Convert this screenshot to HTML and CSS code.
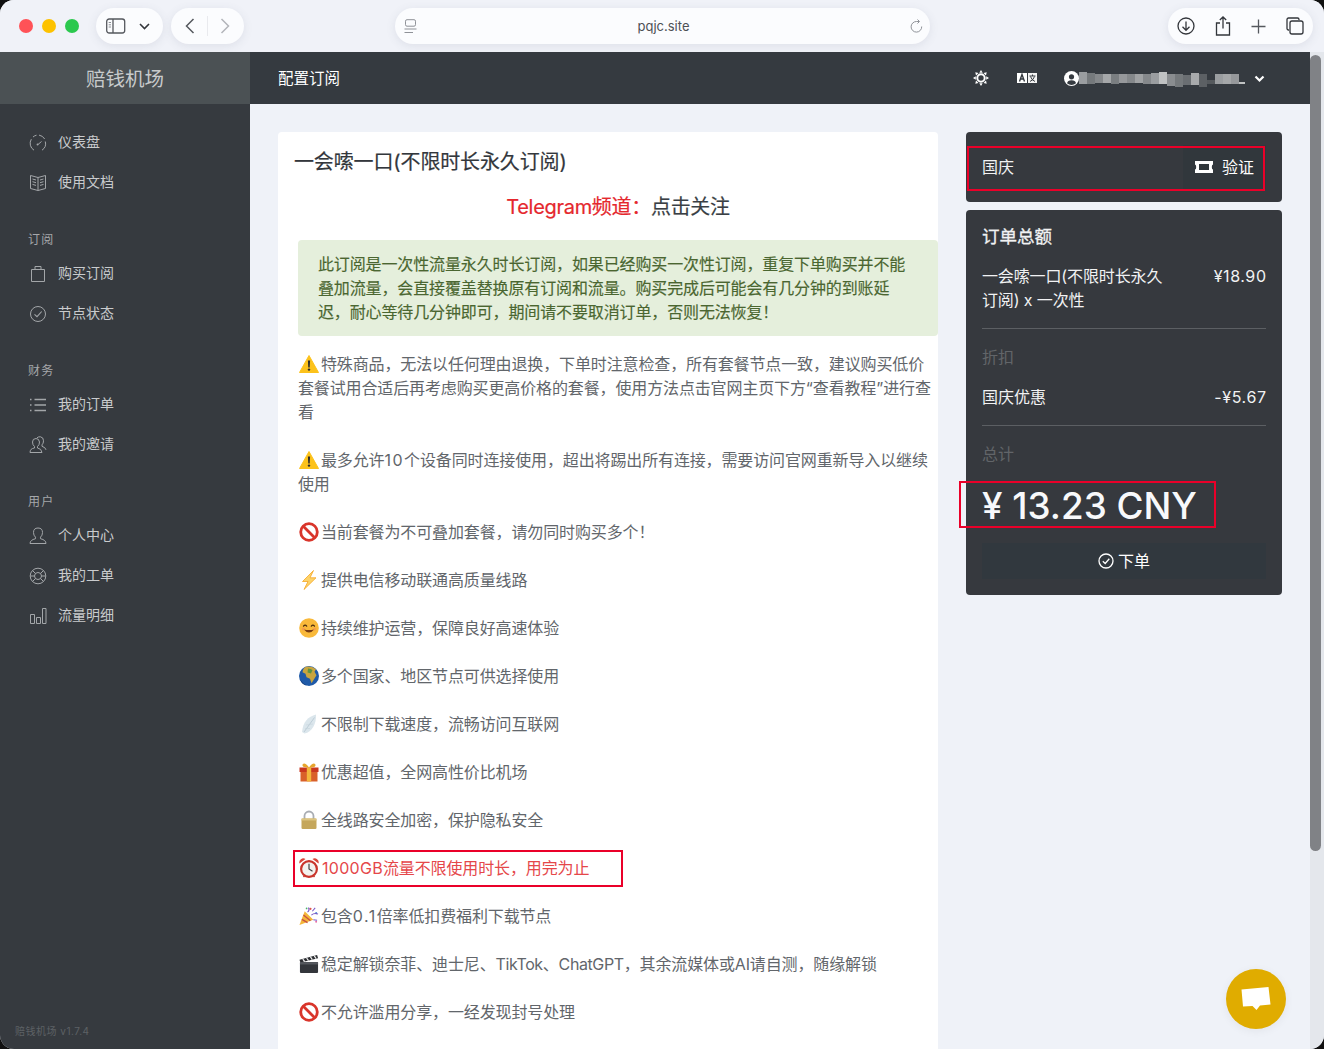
FILE: index.html
```html
<!DOCTYPE html>
<html lang="zh-CN">
<head>
<meta charset="utf-8">
<title>配置订阅</title>
<link rel="stylesheet" href="styles.css">
</head>
<body>
<svg class="sprite" aria-hidden="true">
  <symbol id="e-warn" viewBox="0 0 20 20"><path d="M10 1.500 19.500 18.500H.5Z" fill="#fcc21b" stroke="#fcc21b" stroke-linejoin="round"/><path d="M8.900 6.500h2.200l-.4 7h-1.400Z" fill="#2b2b2b"/><circle cx="10" cy="15.600" r="1.200" fill="#2b2b2b"/></symbol>
  <symbol id="e-no" viewBox="0 0 20 20"><circle cx="10" cy="10" r="8.300" fill="#fff" stroke="#d9352b" stroke-width="2.800"/><path d="M4.300 4.300 15.700 15.700" stroke="#d9352b" stroke-width="2.800"/></symbol>
  <symbol id="e-zap" viewBox="0 0 20 20"><path d="M14.500 .5 3.500 11.500h5.500L5 19.500 17 7.800h-6Z" fill="#fdd36a" stroke="#f5a623" stroke-width=".8"/></symbol>
  <symbol id="e-smile" viewBox="0 0 20 20"><circle cx="10" cy="10" r="9.800" fill="#f9b93a"/><path d="M4.500 8.200q1.600-2.200 3.200 0M12.300 8.200q1.600-2.200 3.200 0" fill="none" stroke="#4b2e10" stroke-width="1.200" stroke-linecap="round"/><path d="M4.600 11.200q5.400 6.600 10.800 0-5.400 1.800-10.800 0Z" fill="#7a3d12"/><circle cx="4.400" cy="11" r="1.600" fill="#f58a5a" opacity=".6"/><circle cx="15.600" cy="11" r="1.600" fill="#f58a5a" opacity=".6"/></symbol>
  <symbol id="e-globe" viewBox="0 0 20 20"><circle cx="10" cy="10" r="10" fill="#1f5aa8"/><path d="M7 .8q6-1.300 10 2.500l-1.500 2.500 2 3.500-2.500 4-2.500 4-1.500-4.500-3.500-1.500-1-3.500-3-1.500Q4 2 7 .8Z" fill="#c9a53f"/><path d="M9 2.500q3 0 4.500 1.500L12 7.500l-3.500-1Z" fill="#5f9440"/><path d="M1 13q3 5 7 6.500Q3 19 1 13Z" fill="#123a78"/></symbol>
  <symbol id="e-wing" viewBox="0 0 20 20"><path d="M17 .5C9 2.500 4 8 3 18l2.500 1.500C13 18 17.500 10 17 .5Z" fill="#dbe6ec"/><path d="M15.500 3.500 5 18" stroke="#b4c5d0" stroke-width=".8"/><path d="M7 11l7-1M6 14.500l5 0" stroke="#c6d4dc" stroke-width=".6"/></symbol>
  <symbol id="e-gift" viewBox="0 0 20 20"><rect x="1.500" y="9" width="17" height="10.500" fill="#d9602a"/><rect x=".5" y="5.500" width="19" height="4.500" fill="#c9371f"/><rect x="7.800" y="5.500" width="4.400" height="14" fill="#f3b63c"/><path d="M10 5.500C7 .5 3.500 .5 3.500 3.300 3.500 5.500 7 5.500 10 5.500ZM10 5.500C13 .5 16.500 .5 16.500 3.300 16.500 5.500 13 5.500 10 5.500Z" fill="#e6a52c"/></symbol>
  <symbol id="e-lock" viewBox="0 0 20 20"><path d="M5.500 9V6a4.500 4.500 0 0 1 9 0v3" fill="none" stroke="#a9adb3" stroke-width="1.800"/><rect x="2.500" y="8.500" width="15" height="10.500" rx="1.200" fill="#c5a75c"/><rect x="2.500" y="8.500" width="15" height="2" fill="#dcc480"/></symbol>
  <symbol id="e-clock" viewBox="0 0 20 20"><path d="M.5 5.500a4 4 0 0 1 6-4.500ZM19.500 5.500a4 4 0 0 0-6-4.500Z" fill="#d9453a"/><circle cx="10" cy="11" r="7.900" fill="#f3f1ee" stroke="#c9352c" stroke-width="2.200"/><path d="M10 5.800V11l3.500 2.300" fill="none" stroke="#444" stroke-width="1.200"/><path d="M4.500 19l1.500-2M15.500 19 14 17" stroke="#c9352c" stroke-width="1.400"/></symbol>
  <symbol id="e-party" viewBox="0 0 21 20"><path d="M.5 19.500 6 5l9 9Z" fill="#f4b63a"/><path d="M3 13.500 9 17M4.700 9 12 15" stroke="#c9503f" stroke-width="1.400"/><circle cx="12" cy="2.500" r="1.200" fill="#e0524a"/><circle cx="18" cy="7" r="1.100" fill="#4a90d9"/><circle cx="8" cy="2" r=".9" fill="#49b36a"/><circle cx="18" cy="16" r="1" fill="#e86aa0"/><path d="M9 6q2.500-2 1-5M13 9q3-2.500 7-1M15 14l4 .5M14 5l3-3.500" stroke="#7a5ac8" stroke-width="1.100" fill="none"/></symbol>
  <symbol id="e-clap" viewBox="0 0 21 20"><rect x="1" y="8" width="19" height="11.500" rx="1" fill="#33363b"/><path d="M.5 5.500 19 .5l1 3.500L1.500 8.500Z" fill="#2b2d31"/><path d="M4 4.800 6 7.500M8 3.700l2 2.800M12 2.600l2 2.800M16 1.500l2 2.800" stroke="#eee" stroke-width="1.300"/><rect x="1" y="8" width="19" height="2.500" fill="#55585e"/></symbol>

  <symbol id="n-gauge" viewBox="0 0 18 18"><path d="M5 16.200A8 8 0 0 1 2.300 5.200M4 3A8 8 0 0 1 7.500 1.200M10 1.100A8 8 0 0 1 15.700 5M16.300 7.500A8 8 0 0 1 13 16.200M9 10.500l3.500-3" fill="none" stroke="currentColor"/><circle cx="8.500" cy="10.500" r=".9" fill="currentColor"/></symbol>
  <symbol id="n-book" viewBox="0 0 18 18"><path d="M9 3.500 1.500 1.500V14.500L9 16.500 16.500 14.500V1.500ZM9 3.500V16.500M3.500 5 7 6M3.500 7.700 7 8.700M3.500 10.400 7 11.400M11 6 14.500 5M11 8.700 14.500 7.700M11 11.400 14.500 10.400" fill="none" stroke="currentColor"/></symbol>
  <symbol id="n-bag" viewBox="0 0 18 18"><path d="M2.500 4.500H15.500V16.500H2.500ZM6 4.500V1.500H12V4.500" fill="none" stroke="currentColor"/></symbol>
  <symbol id="n-check" viewBox="0 0 18 18"><circle cx="9" cy="9" r="7.500" fill="none" stroke="currentColor"/><path d="M5.500 9.300 8 11.600 12.700 6.500" fill="none" stroke="currentColor" stroke-width="1.100"/></symbol>
  <symbol id="n-list" viewBox="0 0 18 18"><path d="M5.500 3.500H17M5.500 9H17M5.500 14.500H17M1 3.500H2.500M1 9H2.500M1 14.500H2.500" fill="none" stroke="currentColor" stroke-width="1.400"/></symbol>
  <symbol id="n-users" viewBox="0 0 18 18"><path d="M1 16.500q0-4 4.500-4.500v-1.500q-2-1.500-2-4.500 0-3.500 3.500-3.500 3 0 3.500 3.500 0 3-2 4.500V12q4 .5 4.500 4.500ZM8 1.800q1.500-1.300 3.500-1 3 .5 3 4 0 2.700-1.500 4v1.500q3.500 1 4 3.500" fill="none" stroke="currentColor"/></symbol>
  <symbol id="n-user" viewBox="0 0 18 18"><path d="M1 16.500q0-3.500 5.500-4.800v-1.500Q4.500 8.500 4.500 5.500 4.500 1 9 1t4.500 4.500q0 3-2 4.700v1.500Q17 13 17 16.500Z" fill="none" stroke="currentColor"/></symbol>
  <symbol id="n-ring" viewBox="0 0 18 18"><circle cx="9" cy="9" r="7.800" fill="none" stroke="currentColor"/><circle cx="9" cy="9" r="3.500" fill="none" stroke="currentColor"/><path d="M3.500 3.500 6.500 6.500M14.500 3.500 11.500 6.500M3.500 14.500 6.500 11.500M14.500 14.500 11.500 11.500M1.500 9H5.500M12.500 9H16.500" fill="none" stroke="currentColor"/></symbol>
  <symbol id="n-bars" viewBox="0 0 18 18"><path d="M1.500 7.500H5.500V16.500H1.500ZM7.500 10.500H11.500V16.500H7.500ZM13.500 1.500H17V16.500H13.500Z" fill="none" stroke="currentColor"/></symbol>
</svg>

<div class="window">
  <header class="toolbar">
    <div class="lights"><i class="light red"></i><i class="light amber"></i><i class="light green"></i></div>
    <div class="pill sidebar-pill">
      <svg width="20" height="16" viewBox="0 0 20 16"><rect x=".7" y="1" width="18" height="14" rx="2.500" fill="none" stroke="#55585e" stroke-width="1.300"/><path d="M7 1V15" stroke="#55585e" stroke-width="1.300"/><path d="M2.700 4.500H5M2.700 6.800H5M2.700 9H5" stroke="#8b8e94"/></svg>
      <svg width="11" height="7" viewBox="0 0 11 7"><path d="M1 1 5.500 5.500 10 1" fill="none" stroke="#33363b" stroke-width="1.600"/></svg>
    </div>
    <div class="pill nav-pill">
      <svg width="10" height="16" viewBox="0 0 10 16"><path d="M8.500 1 1.500 8l7 7" fill="none" stroke="#55585e" stroke-width="1.500"/></svg>
      <span class="pill-sep"></span>
      <svg width="10" height="16" viewBox="0 0 10 16"><path d="M1.500 1 8.500 8l-7 7" fill="none" stroke="#b3b5ba" stroke-width="1.500"/></svg>
    </div>
    <div class="pill address">
      <svg width="13" height="15" viewBox="0 0 13 15"><rect x="1.500" y=".7" width="10" height="6.500" rx="1.500" fill="none" stroke="#8f9298"/><path d="M.5 10H12.500M.5 13.500H9" stroke="#8f9298"/></svg>
      <span class="url">pqjc.site</span>
      <svg width="13" height="14" viewBox="0 0 13 14"><path d="M11.700 7.500A5.300 5.300 0 1 1 6.500 2.500H9M7.500 .5 9.500 2.500 7.500 4.500" fill="none" stroke="#8f9298"/></svg>
    </div>
    <div class="pill tools">
      <svg width="18" height="18" viewBox="0 0 18 18"><circle cx="9" cy="9" r="8" fill="none" stroke="#33363b" stroke-width="1.300"/><path d="M9 4.500V13M5.500 9.800 9 13.300 12.500 9.800" fill="none" stroke="#33363b" stroke-width="1.300"/></svg>
      <svg width="16" height="20" viewBox="0 0 16 20"><path d="M5 7H1.500V19H14.500V7H11M8 12.500V1M4.800 4 8 1l3.200 3" fill="none" stroke="#33363b" stroke-width="1.300"/></svg>
      <svg width="15" height="15" viewBox="0 0 15 15"><path d="M7.500 .5V14.500M.5 7.500H14.500" stroke="#55585e" stroke-width="1.300"/></svg>
      <svg width="18" height="18" viewBox="0 0 18 18"><path d="M3 13H2.500A1.500 1.500 0 0 1 1 11.500V2.500A1.500 1.500 0 0 1 2.500 1H11.500A1.500 1.500 0 0 1 13 2.500V3" fill="none" stroke="#33363b" stroke-width="1.300"/><rect x="4" y="4" width="13" height="13" rx="2" fill="none" stroke="#33363b" stroke-width="1.300"/></svg>
    </div>
  </header>

  <div class="stage">
    <div class="page">
      <div class="topbar">
        <div class="brand">赔钱机场</div>
        <div class="crumb">配置订阅</div>
        <div class="top-actions">
          <svg class="sun" width="16" height="16" viewBox="0 0 16 16"><circle cx="8" cy="8" r="3.700" fill="none" stroke="#fff" stroke-width="2"/><path d="M8 0 9.700 2.800H6.300ZM8 16 9.700 13.200H6.300ZM0 8 2.800 6.300V9.700ZM16 8 13.200 6.300V9.700ZM2.300 2.300 5.500 3 3 5.500ZM13.700 13.700 10.500 13 13 10.500ZM13.700 2.300 13 5.500 10.500 3ZM2.300 13.700 3 10.500 5.500 13Z" fill="#fff"/></svg>
          <svg class="lang" width="20" height="10" viewBox="0 0 20 10"><rect width="10" height="10" fill="#fff"/><rect x="11" width="9" height="10" fill="#f2f2f2"/><path d="M2.500 8.500 5 1.500 7.500 8.500M3.400 6H6.600" fill="none" stroke="#353a40" stroke-width="1.400"/><path d="M12.500 3H18.500M15.500 1.500V3M13.500 3.500Q14.500 7 18 8.500M17.500 3.500Q16.500 7 13 8.500" fill="none" stroke="#353a40"/></svg>
          <div class="account">
            <svg width="15" height="15" viewBox="0 0 15 15"><circle cx="7.500" cy="7.500" r="7.500" fill="#fff"/><circle cx="7.500" cy="5.800" r="2.600" fill="#353a40"/><path d="M3 12.200Q3.500 9.300 7.500 9.300T12 12.200Q10 13.900 7.500 13.900T3 12.200Z" fill="#353a40"/></svg>
            <svg class="redacted" width="166" height="16" viewBox="0 0 166 16">
              <rect x="0" y="0" width="8" height="12" fill="#9a9da0"/><rect x="8" y="1" width="8" height="11" fill="#75797c"/><rect x="16" y="2" width="8" height="9" fill="#85888b"/><rect x="24" y="2" width="8" height="9" fill="#a5a7a9"/><rect x="32" y="2" width="8" height="10" fill="#7a7e81"/><rect x="40" y="2" width="8" height="9" fill="#96989b"/><rect x="48" y="2" width="8" height="9" fill="#85888b"/><rect x="56" y="2" width="8" height="9" fill="#a0a2a4"/><rect x="64" y="2" width="8" height="10" fill="#85888b"/><rect x="72" y="1" width="8" height="11" fill="#9a9da0"/><rect x="80" y="0" width="8" height="12" fill="#c0c2c3"/><rect x="88" y="2" width="8" height="12" fill="#8a8d90"/><rect x="96" y="2" width="8" height="13" fill="#75797c"/><rect x="104" y="3" width="8" height="10" fill="#6a6e72"/><rect x="112" y="1" width="8" height="12" fill="#a8aaac"/><rect x="120" y="2" width="8" height="13" fill="#5c6064"/><rect x="128" y="8" width="8" height="4" fill="#55595d"/><rect x="136" y="2" width="8" height="10" fill="#9a9da0"/><rect x="144" y="2" width="8" height="10" fill="#a5a7a9"/><rect x="152" y="2" width="8" height="10" fill="#96989b"/><rect x="160" y="10" width="6" height="2" fill="#c0c2c3"/>
            </svg>
            <svg class="caret" width="11" height="8" viewBox="0 0 11 8"><path d="M1.500 1.500 5.500 5.500 9.500 1.500" fill="none" stroke="#fff" stroke-width="2.200"/></svg>
          </div>
        </div>
      </div>

      <div class="main">
        <aside class="sidebar">
          <nav class="nav">
            <a class="nav-item"><svg class="nav-icon"><use href="#n-gauge"/></svg>仪表盘</a>
            <a class="nav-item"><svg class="nav-icon"><use href="#n-book"/></svg>使用文档</a>
            <div class="nav-head">订阅</div>
            <a class="nav-item"><svg class="nav-icon"><use href="#n-bag"/></svg>购买订阅</a>
            <a class="nav-item"><svg class="nav-icon"><use href="#n-check"/></svg>节点状态</a>
            <div class="nav-head">财务</div>
            <a class="nav-item"><svg class="nav-icon"><use href="#n-list"/></svg>我的订单</a>
            <a class="nav-item"><svg class="nav-icon"><use href="#n-users"/></svg>我的邀请</a>
            <div class="nav-head">用户</div>
            <a class="nav-item"><svg class="nav-icon"><use href="#n-user"/></svg>个人中心</a>
            <a class="nav-item"><svg class="nav-icon"><use href="#n-ring"/></svg>我的工单</a>
            <a class="nav-item"><svg class="nav-icon"><use href="#n-bars"/></svg>流量明细</a>
          </nav>
          <div class="version">赔钱机场 v1.7.4</div>
        </aside>

        <main class="content">
          <section class="plan">
            <h1 class="plan-title">一会嗦一口(不限时长永久订阅)</h1>
            <div class="plan-body">
              <h2 class="telegram"><span class="tg-red">Telegram频道：</span>点击关注</h2>
              <div class="notice">此订阅是一次性流量永久时长订阅，如果已经购买一次性订阅，重复下单购买并不能叠加流量，会直接覆盖替换原有订阅和流量。购买完成后可能会有几分钟的到账延迟，耐心等待几分钟即可，期间请不要取消订单，否则无法恢复！</div>
              <p class="line"><svg class="emoji"><use href="#e-warn"/></svg>特殊商品，无法以任何理由退换，下单时注意检查，所有套餐节点一致，建议购买低价套餐试用合适后再考虑购买更高价格的套餐，使用方法点击官网主页下方“查看教程”进行查看</p>
              <p class="line"><svg class="emoji"><use href="#e-warn"/></svg>最多允许<span class="num">10</span>个设备同时连接使用，超出将踢出所有连接，需要访问官网重新导入以继续使用</p>
              <p class="line"><svg class="emoji"><use href="#e-no"/></svg>当前套餐为不可叠加套餐，请勿同时购买多个！</p>
              <p class="line"><svg class="emoji"><use href="#e-zap"/></svg>提供电信移动联通高质量线路</p>
              <p class="line"><svg class="emoji"><use href="#e-smile"/></svg>持续维护运营，保障良好高速体验</p>
              <p class="line"><svg class="emoji"><use href="#e-globe"/></svg>多个国家、地区节点可供选择使用</p>
              <p class="line"><svg class="emoji"><use href="#e-wing"/></svg>不限制下载速度，流畅访问互联网</p>
              <p class="line"><svg class="emoji"><use href="#e-gift"/></svg>优惠超值，全网高性价比机场</p>
              <p class="line"><svg class="emoji"><use href="#e-lock"/></svg>全线路安全加密，保护隐私安全</p>
              <p class="line line-red"><svg class="emoji emoji-wide"><use href="#e-clock"/></svg><span class="num-soft">1000GB</span>流量不限使用时长，用完为止<span class="mark mark-line"></span></p>
              <p class="line"><svg class="emoji"><use href="#e-party"/></svg>包含<span class="num">0.1</span>倍率低扣费福利下载节点</p>
              <p class="line"><svg class="emoji"><use href="#e-clap"/></svg>稳定解锁奈菲、迪士尼、<span class="narrow">TikTok</span>、<span class="narrow">ChatGPT</span>，其余流媒体或AI请自测，随缘解锁</p>
              <p class="line"><svg class="emoji"><use href="#e-no"/></svg>不允许滥用分享，一经发现封号处理</p>
            </div>
          </section>

          <div class="side">
            <section class="coupon dark-card">
              <span class="coupon-code">国庆</span>
              <button class="coupon-btn">
                <svg width="18" height="12" viewBox="0 0 18 12"><path d="M0 0H18V3.500Q16.800 3.500 16.800 6T18 8.500V12H0V8.500Q1.200 8.500 1.200 6T0 3.500Z" fill="#fff"/><rect x="4" y="3" width="10" height="6" fill="#31373c"/></svg>
                <span class="coupon-label">验证</span>
              </button>
              <span class="mark mark-coupon"></span>
            </section>
            <section class="summary dark-card">
              <h3 class="summary-title">订单总额</h3>
              <div class="row">
                <div class="row-name">一会嗦一口(不限时长永久订阅) x 一次性</div>
                <div class="row-val">¥18.90</div>
              </div>
              <div class="rule rule-a"></div>
              <div class="muted">折扣</div>
              <div class="row row-disc">
                <div>国庆优惠</div>
                <div class="row-val">-¥5.67</div>
              </div>
              <div class="rule rule-b"></div>
              <div class="muted">总计</div>
              <div class="total">¥ 13.23 CNY<span class="mark mark-total"></span></div>
              <button class="order-btn">
                <svg width="16" height="16" viewBox="0 0 16 16"><circle cx="8" cy="8" r="7" fill="none" stroke="#fff" stroke-width="1.300"/><path d="M4.800 8.300 7.200 10.500 11.300 5.800" fill="none" stroke="#fff" stroke-width="1.300"/></svg>
                下单
              </button>
            </section>
          </div>
        </main>
      </div>
    </div>
    <div class="scrollbar"><div class="thumb"></div></div>
  </div>

  <button class="chat" aria-label="chat">
    <svg width="30" height="26" viewBox="0 0 30 26"><path d="M.5 3.500 27.500 1 29.500 18.500 19 19.500 15.500 24 11.500 20 2 20.500Z" fill="#fff"/></svg>
  </button>
</div>
</body>
</html>
```

FILE: styles.css
```css
* { box-sizing: border-box; }
html, body { margin: 0; height: 100%; overflow: hidden; background: #111; }
body { font-family: Inter, "Noto Sans CJK SC", "Liberation Sans", sans-serif; }
.sprite { position: absolute; width: 0; height: 0; }

.window { position: relative; height: 1049px; display: flex; flex-direction: column; border-radius: 14px; overflow: hidden; background: #eff2f8; }

/* browser chrome */
.toolbar { height: 52px; flex: none; display: flex; align-items: center; padding: 0 11px 0 19px; background: #f0f2f8; }
.lights { display: flex; gap: 9px; width: 77px; }
.light { width: 14px; height: 14px; border-radius: 50%; }
.red { background: #ff5257; }
.amber { background: #fdc200; }
.green { background: #2bc84e; }
.pill { height: 36px; border-radius: 18px; background: #fbfcfe; display: flex; align-items: center; box-shadow: 0 2px 10px rgba(90, 95, 120, .12); }
.sidebar-pill { width: 67px; padding: 0 13px 0 10px; justify-content: space-between; margin-right: 8px; }
.nav-pill { width: 73px; padding: 0 14px; justify-content: space-between; margin-right: 151px; }
.pill-sep { width: 1px; height: 20px; background: #e9eaee; }
.address { width: 535px; padding: 0 7px 0 9px; justify-content: space-between; margin-right: 238px; }
.url { font-size: 13px; color: #4d5055; }
.tools { width: 145px; padding: 0 9px; justify-content: space-between; }

/* app */
.stage { flex: 1; display: flex; min-height: 0; }
.page { width: 1310px; flex: none; display: flex; flex-direction: column; min-height: 0; }
.scrollbar { flex: 1; background: #e4e7ec; padding: 3px 3px 0 0; }
.thumb { height: 796px; border-radius: 6px; background: #808286; }

.topbar { height: 52px; flex: none; display: flex; align-items: center; background: #353a40; color: #fff; }
.brand { width: 250px; height: 100%; padding-bottom: 2px; display: flex; align-items: center; justify-content: center; background: #4b5154; color: #c8cbcc; font-size: 19.500px; }
.crumb { margin-left: 28px; padding-bottom: 2px; font-size: 15.500px; }
.top-actions { margin-left: auto; margin-right: 45px; display: flex; align-items: center; }
.lang { margin-left: 28px; }
.account { margin-left: 27px; display: flex; align-items: center; }
.redacted { margin-top: 3px; }
.caret { margin-left: 9px; margin-top: 2px; }

.main { flex: 1; display: flex; min-height: 0; }
.sidebar { width: 250px; flex: none; display: flex; flex-direction: column; background: #363a3f; padding: 18px 0 11px; }
.nav { display: flex; flex-direction: column; }
.nav-item { height: 40px; padding: 0 0 2px 29px; display: flex; align-items: center; color: #c9cbcd; font-size: 14px; }
.nav-icon { width: 18px; height: 18px; margin: 3px 11px 0 0; color: #a3a6a9; }
.nav-head { height: 27px; margin-top: 24px; padding: 0 0 2px 28px; display: flex; align-items: center; color: #a5a7aa; font-size: 12px; letter-spacing: 1.200px; }
.version { margin-top: auto; padding-left: 15px; color: #5d6165; font-size: 10px; letter-spacing: .5px; line-height: 14px; }

.content { flex: 1; display: grid; grid-template-columns: 660px 316px; gap: 28px; padding: 28px 28px 0; background: #eff2f8; min-width: 0; overflow: hidden; align-items: start; }
.plan { background: #fff; border-radius: 4px 4px 0 0; height: 1200px; }
.plan-title { margin: 0; padding: 16px 16px 0; font-size: 20px; line-height: 28px; font-weight: 400; letter-spacing: -.13px; -webkit-text-stroke: .2px #33373c; color: #33373c; }
.plan-body { padding: 0 0 0 20px; }
.telegram { margin: 16px 0 0; font-size: 20px; line-height: 30px; font-weight: 400; letter-spacing: -.3px; text-align: center; -webkit-text-stroke: .2px currentColor; color: #3a3f45; }
.tg-red { color: #e5272d; }
.notice { margin-top: 18px; padding: 12px 20px; border-radius: 4px; background: #e5efdc; color: #4a6630; font-size: 16px; line-height: 24px; letter-spacing: -.13px; -webkit-text-stroke: .15px #4a6630; }
.line { position: relative; margin: 16px 0 24px; font-size: 16px; line-height: 24px; letter-spacing: -.13px; color: #62666b; }
.notice + .line { margin-top: 16px; }
.emoji { width: 20px; height: 20px; margin: 0 2px 0 1px; vertical-align: -4px; }
.emoji-wide { margin-right: 3px; }
.narrow { letter-spacing: -.4px; }
.num { letter-spacing: 1.500px; }
.num-soft { letter-spacing: .3px; }
.line-red { color: #e5474a; }

.mark { position: absolute; border: 2px solid #ea0029; pointer-events: none; }
.mark-line { left: -5px; top: -6px; width: 330px; height: 37px; }
.mark-coupon { left: 1px; top: 14px; width: 298px; height: 45px; }
.mark-total { left: -23px; top: -4px; width: 257px; height: 47px; }

.dark-card { background: #36393e; border-radius: 4px; color: #f1f2f3; }
.side { display: flex; flex-direction: column; gap: 8px; }
.coupon { position: relative; height: 70px; display: flex; align-items: center; justify-content: space-between; padding: 0 16px; font-size: 16px; }
.coupon-code { padding-bottom: 2px; }
.coupon-btn { width: 83px; height: 44px; padding: 0 12px; border: 0; background: #31373c; color: #fff; font: inherit; display: flex; align-items: center; justify-content: space-between; }
.coupon-label { padding-bottom: 2px; }
.summary { height: 385px; padding: 16px; position: relative; font-size: 16px; line-height: 24px; }
.summary-title { margin: 0; font-size: 17.500px; line-height: 22px; font-weight: 400; -webkit-text-stroke: .3px currentColor; }
.row { display: flex; justify-content: space-between; margin-top: 16px; }
.row-name { width: 190px; letter-spacing: -.13px; }
.row-val { letter-spacing: .6px; margin-right: -.6px; }
.row-disc { margin-top: 16px; }
.rule { height: 1px; background: #5c5f63; }
.rule-a { margin-top: 16px; }
.rule-b { margin-top: 16px; }
.muted { color: #626569; margin-top: 16px; }
.total { position: relative; margin-top: 19px; font-size: 36.800px; line-height: 42px; font-weight: 500; color: #f8f9fb; white-space: nowrap; }
.order-btn { width: 284px; height: 36px; margin-top: 16px; border: 0; background: #31383e; color: #fff; font: inherit; display: flex; align-items: center; justify-content: center; gap: 4px; }

.chat { position: absolute; right: 38px; bottom: 20px; width: 60px; height: 60px; padding: 0; border: 0; border-radius: 50%; background: #e0ac00; display: flex; align-items: center; justify-content: center; box-shadow: 0 2px 10px rgba(0, 0, 0, .06); }
```
